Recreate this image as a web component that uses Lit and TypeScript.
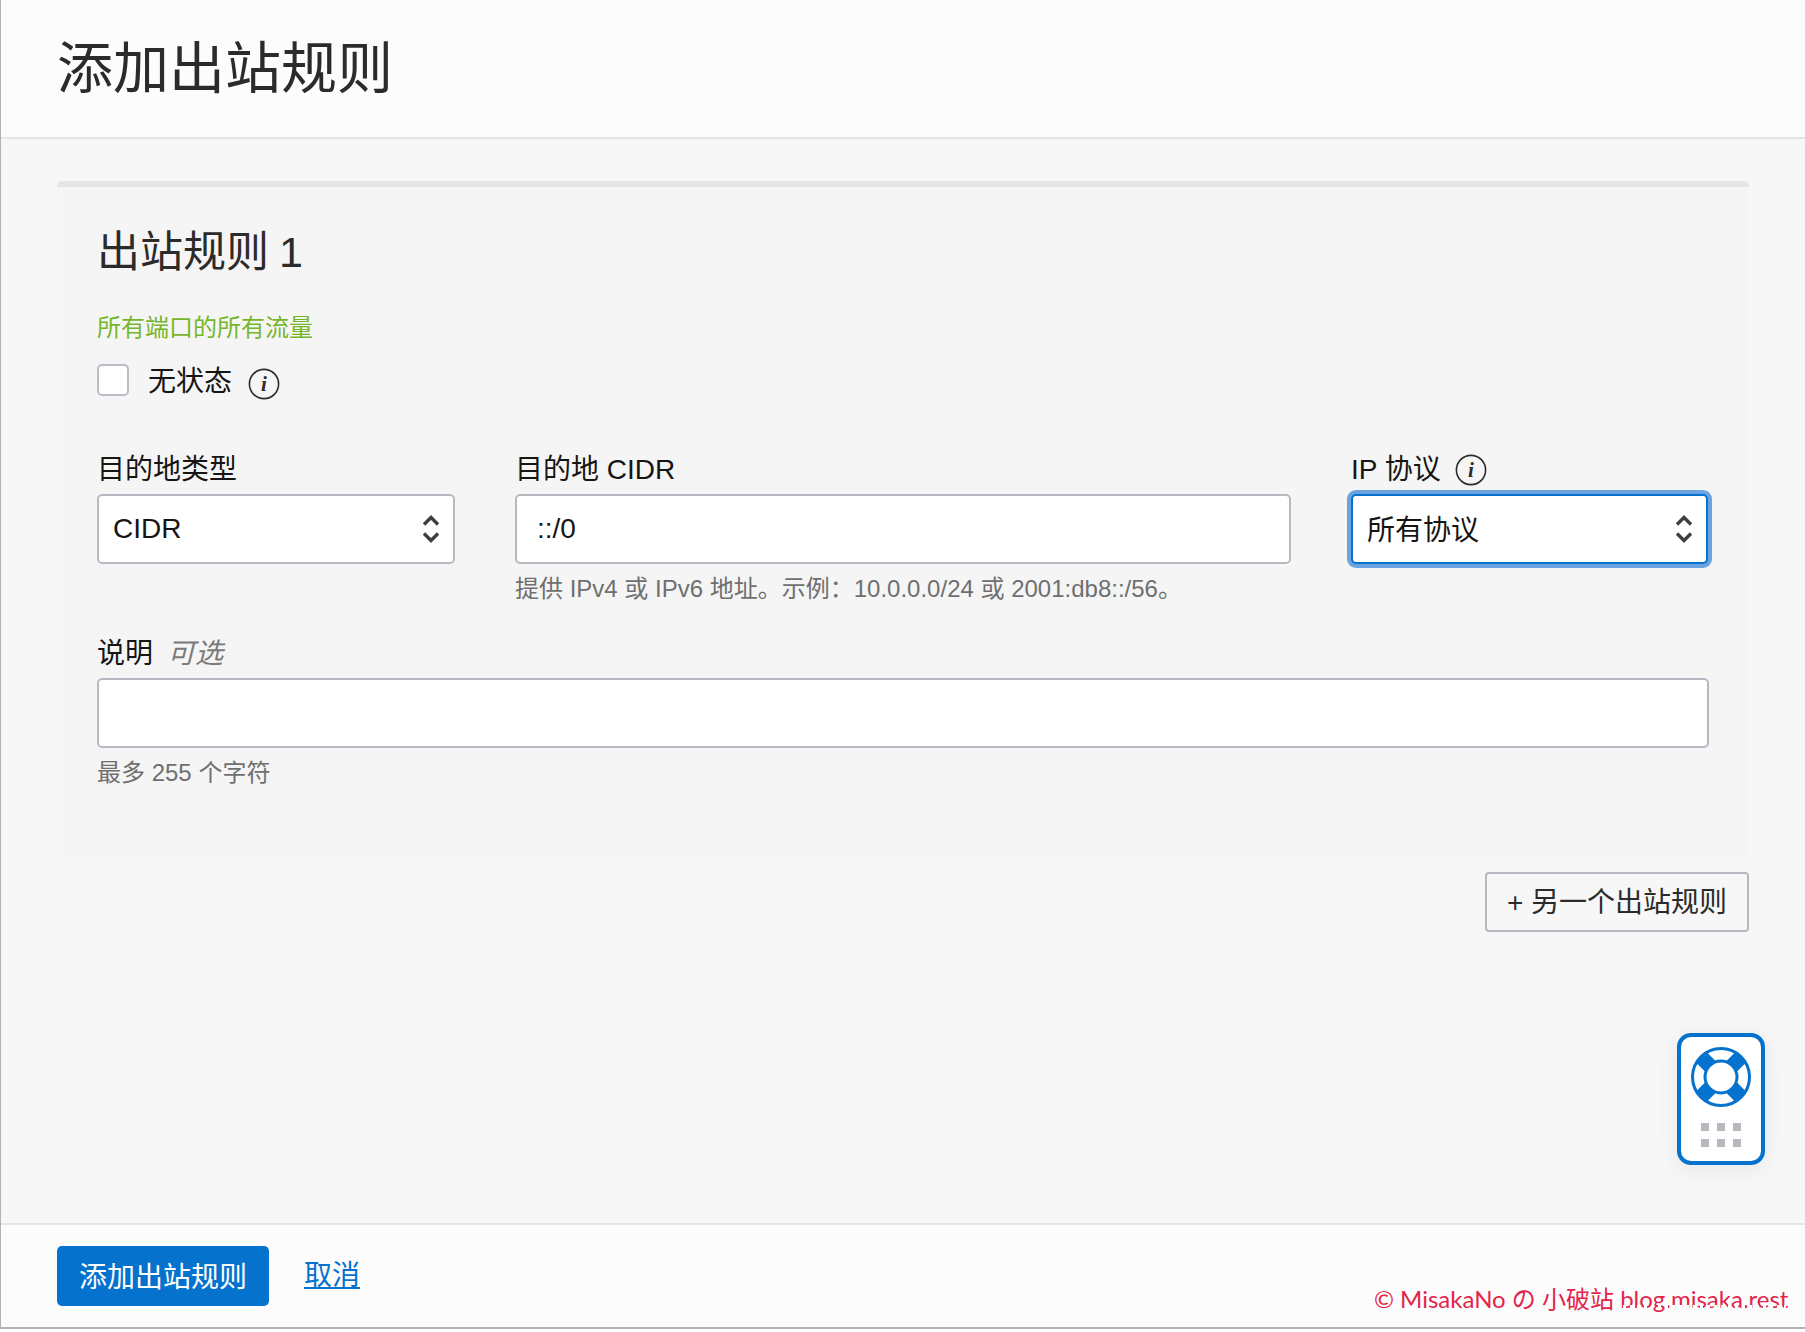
import { LitElement, html, css, svg } from "lit";
import { customElement } from "lit/decorators.js";

const info = html`<svg class="info" viewBox="0 0 32 32" width="32" height="32" aria-hidden="true">
  <circle cx="16" cy="16" r="14.6" fill="none" stroke="#2b2b2b" stroke-width="1.6"></circle>
  <text x="16" y="23" text-anchor="middle" class="i">i</text>
</svg>`;

const arrows = html`<svg class="arrows" viewBox="0 0 18 30" width="18" height="30" aria-hidden="true">
  <path d="M2 10.500 9 3.500l7 7M2 19.500 9 26.500l7-7" fill="none" stroke="#3f3f3f" stroke-width="3.400"></path>
</svg>`;

const buoy = svg`<circle cx="30" cy="30" r="28.500" fill="#fff" stroke="#0572ce" stroke-width="3"></circle>
  <path d="M9.800 9.800 20 20M50.200 9.800 40 20M9.800 50.200 20 40M50.200 50.200 40 40" stroke="#0572ce" stroke-width="15"></path>
  <circle cx="30" cy="30" r="16" fill="#fff" stroke="#0572ce" stroke-width="3"></circle>`;

@customElement("app-root")
export class AppRoot extends LitElement {
  static styles = css`
    :host {
      display: block;
      position: relative;
      width: 1805px;
      height: 1332px;
      background: #fff;
      font-family: "Liberation Sans", "Noto Sans CJK SC", sans-serif;
      color: #161513;
      overflow: hidden;
    }
    .frame {
      box-sizing: border-box;
      height: 1329px;
      display: flex;
      flex-direction: column;
      background: #f7f7f7;
      border-left: 1px solid #aeb2b8;
      border-bottom: 2px solid #b0b5bc;
    }
    .head {
      flex: none;
      box-sizing: border-box;
      height: 139px;
      padding: 0 0 0 56px;
      display: flex;
      align-items: center;
      background: #fcfcfc;
      border-bottom: 2px solid #e4e5e7;
    }
    h1 {
      margin: 0;
      font-size: 56px;
      font-weight: 400;
      color: #2b2b2b;
      line-height: 1;
    }
    .main {
      flex: 1;
      padding: 42px 56px 0;
      display: flex;
      flex-direction: column;
      align-items: stretch;
    }
    .card {
      box-sizing: border-box;
      height: 677px;
      padding: 0 40px;
      background: #f5f5f5;
      border-top: 6px solid #e4e5e7;
      border-radius: 5px 5px 0 0;
    }
    h2 {
      margin: 41px 0 0;
      height: 48px;
      font-size: 43px;
      line-height: 48px;
      font-weight: 400;
      word-spacing: -2px;
      color: #2b2b2b;
    }
    .green {
      margin-top: 36px;
      height: 32px;
      font-size: 24px;
      line-height: 32px;
      color: #75b62a;
    }
    .check {
      margin-top: 20px;
      display: flex;
      align-items: flex-start;
      height: 40px;
      font-size: 28px;
      line-height: 36px;
    }
    .box {
      box-sizing: border-box;
      width: 32px;
      height: 32px;
      background: #fff;
      border: 2px solid #b9bec6;
      border-radius: 5px;
      margin-right: 19px;
    }
    .check .info {
      margin: 4px 0 0 16px;
    }
    .info {
      flex: none;
    }
    .i {
      font: italic 700 21px "Liberation Serif", serif;
      fill: #2b2b2b;
    }
    .row {
      margin-top: 46px;
      display: grid;
      grid-template-columns: 358px 776px 357px;
      column-gap: 60px;
      width: 1611px;
    }
    .field-label {
      display: flex;
      align-items: center;
      gap: 14px;
      height: 40px;
      font-size: 28px;
      line-height: 40px;
      color: #161513;
      white-space: nowrap;
    }
    .opt {
      font-style: italic;
      color: #7a7a7a;
    }
    .control {
      box-sizing: border-box;
      height: 70px;
      margin-top: 4px;
      display: flex;
      align-items: center;
      justify-content: space-between;
      padding: 0 13px 0 14px;
      background: #fff;
      border: 2px solid #b5bac2;
      border-radius: 5px;
      font-size: 28px;
      color: #161513;
    }
    .text {
      padding-left: 20px;
    }
    .focus {
      border-color: #0572ce;
      box-shadow: 0 0 0 4px #6ba3e0;
    }
    .focus span {
      margin-top: -2px;
    }
    .hint {
      height: 32px;
      margin-top: 9px;
      font-size: 24px;
      line-height: 32px;
      color: #6f6f6f;
      white-space: nowrap;
    }
    .desc {
      margin-top: 29px;
      width: 1612px;
    }
    .actions {
      display: flex;
      justify-content: flex-end;
      margin-top: 14px;
    }
    .ghost {
      box-sizing: border-box;
      height: 60px;
      width: 264px;
      padding-bottom: 4px;
      display: flex;
      align-items: center;
      justify-content: center;
      border: 2px solid #b5bac2;
      border-radius: 4px;
      background: #f7f7f7;
      font-size: 28px;
      color: #2b2b2b;
    }
    .foot {
      flex: none;
      box-sizing: border-box;
      height: 104px;
      padding: 21px 56px 0;
      display: flex;
      align-items: flex-start;
      gap: 35px;
      background: #fcfcfc;
      border-top: 2px solid #e4e5e7;
    }
    .primary {
      box-sizing: border-box;
      width: 212px;
      height: 60px;
      padding-bottom: 3px;
      display: flex;
      align-items: center;
      justify-content: center;
      background: #0572ce;
      color: #fff;
      border-radius: 5px;
      font-size: 28px;
    }
    .cancel {
      height: 60px;
      line-height: 60px;
      font-size: 28px;
      color: #0572ce;
      text-decoration: underline;
    }
    .help {
      position: absolute;
      left: 1677px;
      top: 1033px;
      box-sizing: border-box;
      width: 88px;
      height: 132px;
      background: #fff;
      border: 4px solid #0572ce;
      border-radius: 14px;
      box-shadow: 0 4px 24px rgba(0, 0, 0, 0.07);
      display: flex;
      flex-direction: column;
      align-items: center;
      padding-top: 10px;
    }
    .dots {
      margin-top: 16px;
      display: grid;
      grid-template-columns: repeat(3, 8px);
      grid-auto-rows: 8px;
      gap: 8px;
    }
    .dots span {
      background: #b5bac2;
    }
    .mark {
      position: absolute;
      left: 1374px;
      top: 1283px;
      font-family: Lato, "Noto Sans CJK SC", sans-serif;
      font-weight: 400;
      font-size: 24px;
      line-height: 32px;
      color: #e2244a;
      white-space: nowrap;
    }
    .speck {
      position: absolute;
      left: 1616px;
      top: 1305px;
      width: 170px;
      height: 3px;
      background: repeating-linear-gradient(90deg, #fff 0 3px, transparent 3px 7px);
    }
  `;

  render() {
    return html`
      <div class="frame">
        <header class="head"><h1>添加出站规则</h1></header>
        <main class="main">
          <section class="card">
            <h2>出站规则 1</h2>
            <div class="green">所有端口的所有流量</div>
            <div class="check"><span class="box"></span>无状态${info}</div>
            <div class="row">
              <div>
                <div class="field-label">目的地类型</div>
                <div class="control">CIDR${arrows}</div>
              </div>
              <div>
                <div class="field-label">目的地 CIDR</div>
                <div class="control text">::/0</div>
                <div class="hint">提供 IPv4 或 IPv6 地址。示例：10.0.0.0/24 或 2001:db8::/56。</div>
              </div>
              <div>
                <div class="field-label">IP 协议 ${info}</div>
                <div class="control focus"><span>所有协议</span>${arrows}</div>
              </div>
            </div>
            <div class="desc">
              <div class="field-label">说明<span class="opt">可选</span></div>
              <div class="control"></div>
              <div class="hint">最多 255 个字符</div>
            </div>
          </section>
          <div class="actions"><div class="ghost">+ 另一个出站规则</div></div>
        </main>
        <footer class="foot">
          <div class="primary">添加出站规则</div>
          <div class="cancel">取消</div>
        </footer>
      </div>
      <div class="help">
        <svg viewBox="0 0 60 60" width="60" height="60" aria-hidden="true">${buoy}</svg>
        <div class="dots"><span></span><span></span><span></span><span></span><span></span><span></span></div>
      </div>
      <div class="mark">© MisakaNo の 小破站 blog.misaka.rest</div>
      <div class="speck"></div>
    `;
  }
}
